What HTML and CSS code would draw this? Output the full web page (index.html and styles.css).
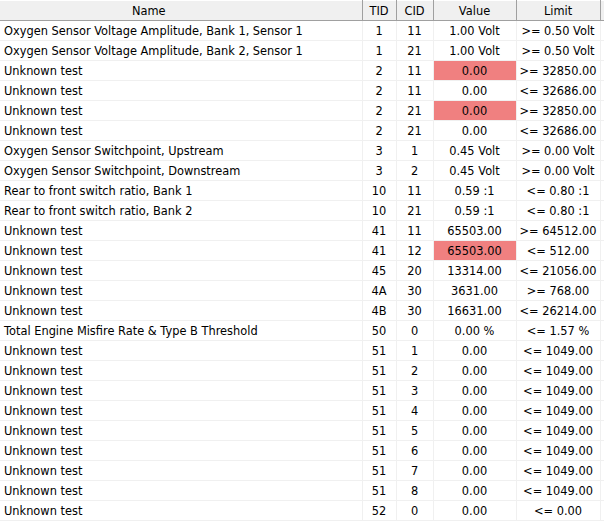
FILE: index.html
```html
<!DOCTYPE html>
<html>
<head>
<meta charset="utf-8">
<link rel="stylesheet" href="styles.css">
</head>
<body>
<div class="view">
<table class="grid">
<colgroup>
<col class="c-name"><col class="c-tid"><col class="c-cid"><col class="c-val"><col class="c-lim"><col class="c-fill">
</colgroup>
<thead>
<tr><th>Name</th><th>TID</th><th>CID</th><th>Value</th><th>Limit</th><th class="fill"></th></tr>
</thead>
<tbody>
<tr><td class="name">Oxygen Sensor Voltage Amplitude, Bank 1, Sensor 1</td><td>1</td><td>11</td><td>1.00 Volt</td><td>&gt;= 0.50 Volt</td><td></td></tr>
<tr><td class="name">Oxygen Sensor Voltage Amplitude, Bank 2, Sensor 1</td><td>1</td><td>21</td><td>1.00 Volt</td><td>&gt;= 0.50 Volt</td><td></td></tr>
<tr><td class="name">Unknown test</td><td>2</td><td>11</td><td class="fail">0.00</td><td>&gt;= 32850.00</td><td></td></tr>
<tr><td class="name">Unknown test</td><td>2</td><td>11</td><td>0.00</td><td>&lt;= 32686.00</td><td></td></tr>
<tr><td class="name">Unknown test</td><td>2</td><td>21</td><td class="fail">0.00</td><td>&gt;= 32850.00</td><td></td></tr>
<tr><td class="name">Unknown test</td><td>2</td><td>21</td><td>0.00</td><td>&lt;= 32686.00</td><td></td></tr>
<tr><td class="name">Oxygen Sensor Switchpoint, Upstream</td><td>3</td><td>1</td><td>0.45 Volt</td><td>&gt;= 0.00 Volt</td><td></td></tr>
<tr><td class="name">Oxygen Sensor Switchpoint, Downstream</td><td>3</td><td>2</td><td>0.45 Volt</td><td>&gt;= 0.00 Volt</td><td></td></tr>
<tr><td class="name">Rear to front switch ratio, Bank 1</td><td>10</td><td>11</td><td>0.59 :1</td><td>&lt;= 0.80 :1</td><td></td></tr>
<tr><td class="name">Rear to front switch ratio, Bank 2</td><td>10</td><td>21</td><td>0.59 :1</td><td>&lt;= 0.80 :1</td><td></td></tr>
<tr><td class="name">Unknown test</td><td>41</td><td>11</td><td>65503.00</td><td>&gt;= 64512.00</td><td></td></tr>
<tr><td class="name">Unknown test</td><td>41</td><td>12</td><td class="fail">65503.00</td><td>&lt;= 512.00</td><td></td></tr>
<tr><td class="name">Unknown test</td><td>45</td><td>20</td><td>13314.00</td><td>&lt;= 21056.00</td><td></td></tr>
<tr><td class="name">Unknown test</td><td>4A</td><td>30</td><td>3631.00</td><td>&gt;= 768.00</td><td></td></tr>
<tr><td class="name">Unknown test</td><td>4B</td><td>30</td><td>16631.00</td><td>&lt;= 26214.00</td><td></td></tr>
<tr><td class="name">Total Engine Misfire Rate &amp; Type B Threshold</td><td>50</td><td>0</td><td>0.00 %</td><td>&lt;= 1.57 %</td><td></td></tr>
<tr><td class="name">Unknown test</td><td>51</td><td>1</td><td>0.00</td><td>&lt;= 1049.00</td><td></td></tr>
<tr><td class="name">Unknown test</td><td>51</td><td>2</td><td>0.00</td><td>&lt;= 1049.00</td><td></td></tr>
<tr><td class="name">Unknown test</td><td>51</td><td>3</td><td>0.00</td><td>&lt;= 1049.00</td><td></td></tr>
<tr><td class="name">Unknown test</td><td>51</td><td>4</td><td>0.00</td><td>&lt;= 1049.00</td><td></td></tr>
<tr><td class="name">Unknown test</td><td>51</td><td>5</td><td>0.00</td><td>&lt;= 1049.00</td><td></td></tr>
<tr><td class="name">Unknown test</td><td>51</td><td>6</td><td>0.00</td><td>&lt;= 1049.00</td><td></td></tr>
<tr><td class="name">Unknown test</td><td>51</td><td>7</td><td>0.00</td><td>&lt;= 1049.00</td><td></td></tr>
<tr><td class="name">Unknown test</td><td>51</td><td>8</td><td>0.00</td><td>&lt;= 1049.00</td><td></td></tr>
<tr><td class="name">Unknown test</td><td>52</td><td>0</td><td>0.00</td><td>&lt;= 0.00</td><td></td></tr>
</tbody>
</table>
</div>
</body>
</html>
```

FILE: styles.css
```css
html, body {
  margin: 0;
  padding: 0;
  background: #ffffff;
}
.view {
  width: 604px;
  height: 527px;
  overflow: hidden;
}
.grid {
  table-layout: fixed;
  border-collapse: collapse;
  width: 620px;
  font-family: "DejaVu Sans", sans-serif;
  font-size: 11.4px;
  color: #000;
}
.c-name { width: 362px; }
.c-tid { width: 34px; }
.c-cid { width: 37px; }
.c-val { width: 83px; }
.c-lim { width: 84px; }
.c-fill { width: 20px; }
.grid th {
  height: 20px;
  padding: 0;
  font-weight: normal;
  background: #f0f0f0;
  border-top: 1px solid #ffffff;
  border-bottom: 1px solid #a0a0a0;
  border-right: 1px solid #a0a0a0;
  text-align: center;
  line-height: 18px;
  box-sizing: border-box;
}
.grid th:first-child { text-align: right; padding-right: 196px; }
.grid td {
  height: 20px;
  padding: 2px 0 0 0;
  border-bottom: 1px solid #f0f0f0;
  border-right: 1px solid #f0f0f0;
  text-align: center;
  line-height: 17px;
  white-space: nowrap;
  overflow: hidden;
  box-sizing: border-box;
}
.grid td.name {
  text-align: left;
  padding-left: 4px;
}
.grid td.fail {
  background: #f08080;
}
```
